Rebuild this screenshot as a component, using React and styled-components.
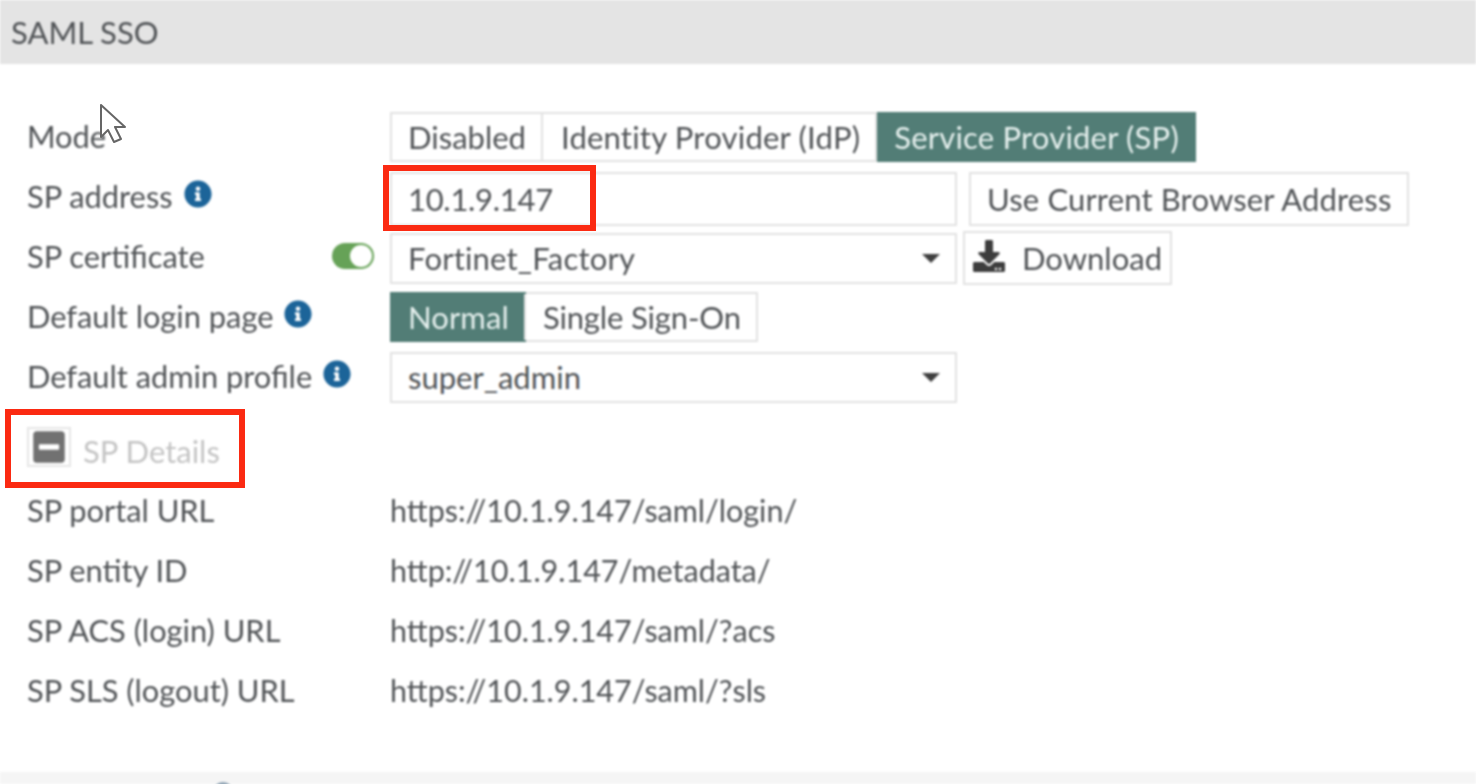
import React from "react";
import styled, { createGlobalStyle } from "styled-components";
import { FaInfoCircle, FaDownload, FaMinusSquare } from "react-icons/fa";

const GlobalStyle = createGlobalStyle`
  html, body {
    margin: 0;
    background: #fff;
    overflow: hidden;
  }
`;

const Page = styled.div`
  position: relative;
  width: 1476px;
  height: 784px;
  overflow: hidden;
  font-family: Lato, "Open Sans", sans-serif;
  font-size: 31px;
  color: #505356;
  background: #fff;
`;

const Blurred = styled.div`
  filter: blur(0.8px);
`;

const Header = styled.div`
  height: 64px;
  padding-left: 11px;
  display: flex;
  align-items: center;
  background: #e4e4e4;
`;

const Body = styled.div`
  padding: 43px 0 0 27px;
  height: 708px;
  box-sizing: border-box;
`;

const Row = styled.div`
  display: grid;
  grid-template-columns: 363px 1fr;
  align-items: center;
  height: 60px;
`;

const Label = styled.div`
  display: flex;
  align-items: center;
  gap: 11px;
  margin-top: -2px;
  padding-right: 16px;
  font-size: 30.8px;
  white-space: nowrap;
`;

const Info = styled(FaInfoCircle)`
  color: #1c6499;
  font-size: 28px;
  flex: none;
  margin-top: -4px;
`;

const Toggle = styled.span`
  position: relative;
  margin-left: auto;
  width: 42px;
  height: 26px;
  border-radius: 13px;
  background: #66a257;
  &::after {
    content: "";
    position: absolute;
    right: 2px;
    top: 2px;
    width: 22px;
    height: 22px;
    border-radius: 50%;
    background: #fff;
  }
`;

const Controls = styled.div`
  display: flex;
  align-items: center;
  gap: ${(p) => p.$gap || 12}px;
  margin-top: ${(p) => p.$top || 0}px;
`;

const Group = styled.div`
  display: flex;
  justify-self: start;
  height: 50px;
  margin-top: -1px;
  box-sizing: border-box;
  border: 2px solid #e2e2e2;
`;

const Segment = styled.div`
  display: flex;
  align-items: center;
  padding: 0 ${(p) => p.$right ?? 17}px 0 ${(p) => p.$left ?? 17}px;
  letter-spacing: ${(p) => p.$track || 0}px;
  white-space: nowrap;
  color: ${(p) => (p.$active ? "#e6f0ee" : "inherit")};
  background: ${(p) => (p.$active ? "#527d76" : "#fff")};
  margin: ${(p) => (p.$active ? "-2px" : "0")};
  & + & {
    border-left: 2px solid #e2e2e2;
  }
`;

const Field = styled.div`
  display: flex;
  align-items: center;
  justify-content: space-between;
  box-sizing: border-box;
  width: 567px;
  height: ${(p) => p.$h || 51}px;
  padding: 0 16px;
  border: 2px solid #e2e2e2;
  background: #fff;
  letter-spacing: ${(p) => p.$track || 0}px;
`;

const Caret = styled.span`
  width: 0;
  height: 0;
  margin-right: -1px;
  border-left: 9px solid transparent;
  border-right: 9px solid transparent;
  border-top: 9px solid #3f3f3f;
`;

const Button = styled.div`
  display: flex;
  align-items: center;
  gap: 17px;
  box-sizing: border-box;
  height: 54px;
  padding: 0 ${(p) => p.$pad || 16}px;
  border: 2px solid #e2e2e2;
  background: #fff;
  white-space: nowrap;
  letter-spacing: ${(p) => p.$track || 0}px;
`;

const DownloadIcon = styled(FaDownload)`
  color: #3d3d3d;
  font-size: 32px;
  margin-top: -4px;
`;

const UrlValue = styled.div`
  font-size: 30.5px;
  margin-top: -2px;
`;

const Section = styled.div`
  display: flex;
  align-items: center;
  gap: 12px;
  height: 60px;
  margin-top: 14px;
  color: #c4c4c4;
`;

const Collapse = styled.span`
  display: flex;
  align-items: center;
  justify-content: center;
  box-sizing: border-box;
  width: 44px;
  height: 40px;
  margin-top: -8px;
  border: 2px solid #e6e6e6;
  color: #717171;
  font-size: 36px;
`;

const Band = styled.div`
  position: relative;
  height: 12px;
  background: #f5f5f5;
  &::after {
    content: "";
    position: absolute;
    left: 213px;
    top: 10px;
    width: 20px;
    height: 20px;
    border-radius: 50%;
    background: #8fa3b4;
  }
`;

const Highlight = styled.div`
  position: absolute;
  left: ${(p) => p.$x}px;
  top: ${(p) => p.$y}px;
  width: ${(p) => p.$w}px;
  height: ${(p) => p.$h}px;
  box-sizing: border-box;
  border: 6px solid #fb2a12;
`;

const Cursor = styled.svg`
  position: absolute;
  left: 98px;
  top: 102px;
  filter: blur(0.6px);
`;

const urls = [
  ["SP portal URL", "https://10.1.9.147/saml/login/"],
  ["SP entity ID", "http://10.1.9.147/metadata/"],
  ["SP ACS (login) URL", "https://10.1.9.147/saml/?acs"],
  ["SP SLS (logout) URL", "https://10.1.9.147/saml/?sls"],
];

export default function App() {
  return (
    <Page>
      <GlobalStyle />
      <Blurred>
        <Header>SAML SSO</Header>
        <Body>
          <Row>
            <Label>Mode</Label>
            <Group>
              <Segment $left={16} $right={15}>Disabled</Segment>
              <Segment $left={18} $right={17} $track={0.22}>Identity Provider (IdP)</Segment>
              <Segment $active $right={17} $track={0.2}>Service Provider (SP)</Segment>
            </Group>
          </Row>
          <Row>
            <Label>SP address <Info /></Label>
            <Controls $top={4}>
              <Field $h={54} $track={-0.3}>10.1.9.147</Field>
              <Button $track={0.15}>Use Current Browser Address</Button>
            </Controls>
          </Row>
          <Row>
            <Label>SP certificate <Toggle /></Label>
            <Controls $gap={6} $top={2}>
              <Field $track={0.2}>Fortinet_Factory<Caret /></Field>
              <Button $pad={8}><DownloadIcon />Download</Button>
            </Controls>
          </Row>
          <Row>
            <Label>Default login page <Info /></Label>
            <Group>
              <Segment $active $left={18} $right={17} $track={0.1}>Normal</Segment>
              <Segment $right={15} $track={-0.15}>Single Sign-On</Segment>
            </Group>
          </Row>
          <Row>
            <Label>Default admin profile <Info /></Label>
            <Controls>
              <Field>super_admin<Caret /></Field>
            </Controls>
          </Row>
          <Section>
            <Collapse><FaMinusSquare /></Collapse>
            SP Details
          </Section>
          {urls.map(([label, url]) => (
            <Row key={label}>
              <Label>{label}</Label>
              <UrlValue>{url}</UrlValue>
            </Row>
          ))}
        </Body>
        <Band />
      </Blurred>
      <Highlight $x={383} $y={165} $w={213} $h={66} />
      <Highlight $x={5} $y={409} $w={240} $h={79} />
      <Cursor width="30" height="44" viewBox="0 0 30 44">
        <path
          d="M3 3 L3 35 L10 28 L16 40 L23 37 L17 25 L27 25 Z"
          fill="#fff"
          stroke="#666"
          strokeWidth="2"
          strokeLinejoin="round"
        />
      </Cursor>
    </Page>
  );
}
